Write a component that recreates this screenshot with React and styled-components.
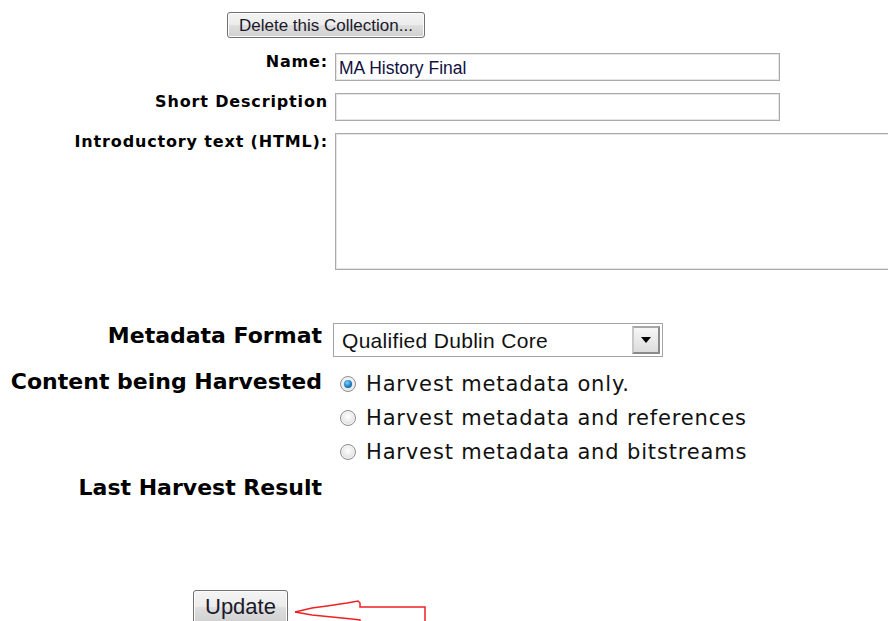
import styled, { createGlobalStyle } from "styled-components";

const GlobalStyle = createGlobalStyle`
  html, body {
    margin: 0;
    padding: 0;
    background: #ffffff;
    overflow: hidden;
  }
`;

const Page = styled.div`
  width: 888px;
  height: 621px;
  overflow: hidden;
  position: relative;
  color: #000;
`;

const SysButton = styled.button`
  font-family: "Liberation Sans", Arial, sans-serif;
  font-size: ${(p) => p.size || 17}px;
  color: #1a1a2a;
  height: ${(p) => p.h || 26}px;
  padding: 0 ${(p) => p.pad || 11}px;
  border: 1px solid #707070;
  border-radius: 3px;
  background: linear-gradient(#f4f4f4 0%, #ececec 48%, #dedede 52%, #d0d0d0 100%);
  box-shadow: inset 0 0 0 1px #fcfcfc;
  line-height: 1;
`;

const TopBar = styled.div`
  padding: 12px 0 0 227px;
`;

const EditGrid = styled.div`
  display: grid;
  grid-template-columns: 327px 560px;
  column-gap: 8px;
  row-gap: 12px;
  margin-top: 15px;
`;

const SmallLabel = styled.label`
  font-family: "DejaVu Sans", Verdana, sans-serif;
  font-weight: bold;
  font-size: 16px;
  letter-spacing: 0.85px;
  line-height: 18px;
  text-align: right;
  margin-right: -1px;
  white-space: nowrap;
`;

const TextInput = styled.input`
  width: 445px;
  height: 28px;
  box-sizing: border-box;
  border: 1px solid #aaaaaa;
  box-shadow: inset 0 0 0 1px #e6e6e6;
  font-family: "Liberation Sans", Arial, sans-serif;
  font-size: 17.5px;
  padding: 2px 3px 0;
  color: #101040;
  outline: none;
`;

const TextArea = styled.textarea`
  width: 570px;
  height: 137px;
  box-sizing: border-box;
  border: 1px solid #aaaaaa;
  box-shadow: inset 0 0 0 1px #e6e6e6;
  resize: none;
  outline: none;
`;

const HarvestGrid = styled.div`
  display: grid;
  grid-template-columns: 322px auto;
  column-gap: 11px;
  margin-top: 53px;
  align-items: start;
`;

const BigLabel = styled.div`
  font-family: "DejaVu Sans", Verdana, sans-serif;
  font-weight: bold;
  font-size: 22px;
  line-height: 26px;
  text-align: right;
  white-space: nowrap;
  margin-top: ${(p) => p.gap || 0}px;
`;

const SelectBox = styled.div`
  display: flex;
  align-items: center;
  width: 330px;
  height: 34px;
  box-sizing: border-box;
  border: 1px solid #a5a5a5;
  padding-left: 8px;
  font-family: "Liberation Sans", Arial, sans-serif;
  font-size: 21px;
  letter-spacing: 0.3px;
  color: #111;
`;

const SelectText = styled.span`
  flex: 1;
  padding-top: 2px;
`;

const DropButton = styled.span`
  width: 28px;
  height: 28px;
  margin-right: 2px;
  box-sizing: border-box;
  border: 2px solid #8a8a8a;
  border-top-color: #a8a8a8;
  border-left-color: #c8c8c8;
  background: linear-gradient(#f6f6f6, #dcdcdc);
  display: flex;
  align-items: center;
  justify-content: center;

  &::after {
    content: "";
    border-left: 5px solid transparent;
    border-right: 5px solid transparent;
    border-top: 6px solid #000;
  }
`;

const RadioList = styled.div`
  display: flex;
  flex-direction: column;
  gap: 10px;
  margin-top: 15px;
  padding-left: 7px;
`;

const RadioRow = styled.div`
  display: flex;
  align-items: center;
  gap: 10px;
  font-family: "DejaVu Sans", Verdana, sans-serif;
  font-size: 21px;
  letter-spacing: 0.85px;
  height: 24px;
  color: #111;
`;

const RadioDot = styled.span`
  flex: none;
  width: 16px;
  height: 16px;
  box-sizing: border-box;
  border-radius: 50%;
  border: 1px solid #8f8f8f;
  background: radial-gradient(circle at 50% 40%, #ffffff 0%, #e8e8e8 55%, #c8c8c8 100%);
  box-shadow: inset 0 0 0 1px #f4f4f4;
  display: flex;
  align-items: center;
  justify-content: center;

  &::after {
    content: "";
    display: ${(p) => (p.checked ? "block" : "none")};
    width: 8px;
    height: 8px;
    border-radius: 50%;
    background: radial-gradient(circle at 40% 35%, #7fd0ff 0%, #1b7fc4 55%, #0b3f6e 100%);
  }
`;

const Spacer = styled.div``;

const UpdateRow = styled.div`
  position: relative;
  margin-top: 89px;
  padding-left: 193px;
`;

const Pointer = styled.svg`
  position: absolute;
  left: 292px;
  top: 8px;
`;

const harvestOptions = [
  { text: "Harvest metadata only.", checked: true },
  { text: "Harvest metadata and references" },
  { text: "Harvest metadata and bitstreams" },
];

export default function App() {
  return (
    <Page>
      <GlobalStyle />
      <TopBar>
        <SysButton>Delete this Collection...</SysButton>
      </TopBar>

      <EditGrid>
        <SmallLabel>Name:</SmallLabel>
        <TextInput defaultValue="MA History Final" />
        <SmallLabel>Short Description</SmallLabel>
        <TextInput />
        <SmallLabel>Introductory text (HTML):</SmallLabel>
        <TextArea />
      </EditGrid>

      <HarvestGrid>
        <BigLabel>Metadata Format</BigLabel>
        <SelectBox>
          <SelectText>Qualified Dublin Core</SelectText>
          <DropButton />
        </SelectBox>

        <BigLabel gap={12}>Content being Harvested</BigLabel>
        <RadioList>
          {harvestOptions.map((o) => (
            <RadioRow key={o.text}>
              <RadioDot checked={o.checked} />
              {o.text}
            </RadioRow>
          ))}
        </RadioList>

        <BigLabel gap={11}>Last Harvest Result</BigLabel>
        <Spacer />
      </HarvestGrid>

      <UpdateRow>
        <SysButton size={22} h={34} pad={11}>Update</SysButton>
        <Pointer width="140" height="24" viewBox="0 0 140 24">
          <polyline
            points="3,14 20,10 35,8 55,5 66,3 68,5 68,9 133,9 133,24"
            fill="none"
            stroke="#ee2222"
            strokeWidth="1.5"
          />
          <polyline
            points="3,14 20,17 40,19 60,21 68,22 68,24"
            fill="none"
            stroke="#ee2222"
            strokeWidth="1.5"
          />
        </Pointer>
      </UpdateRow>
    </Page>
  );
}
